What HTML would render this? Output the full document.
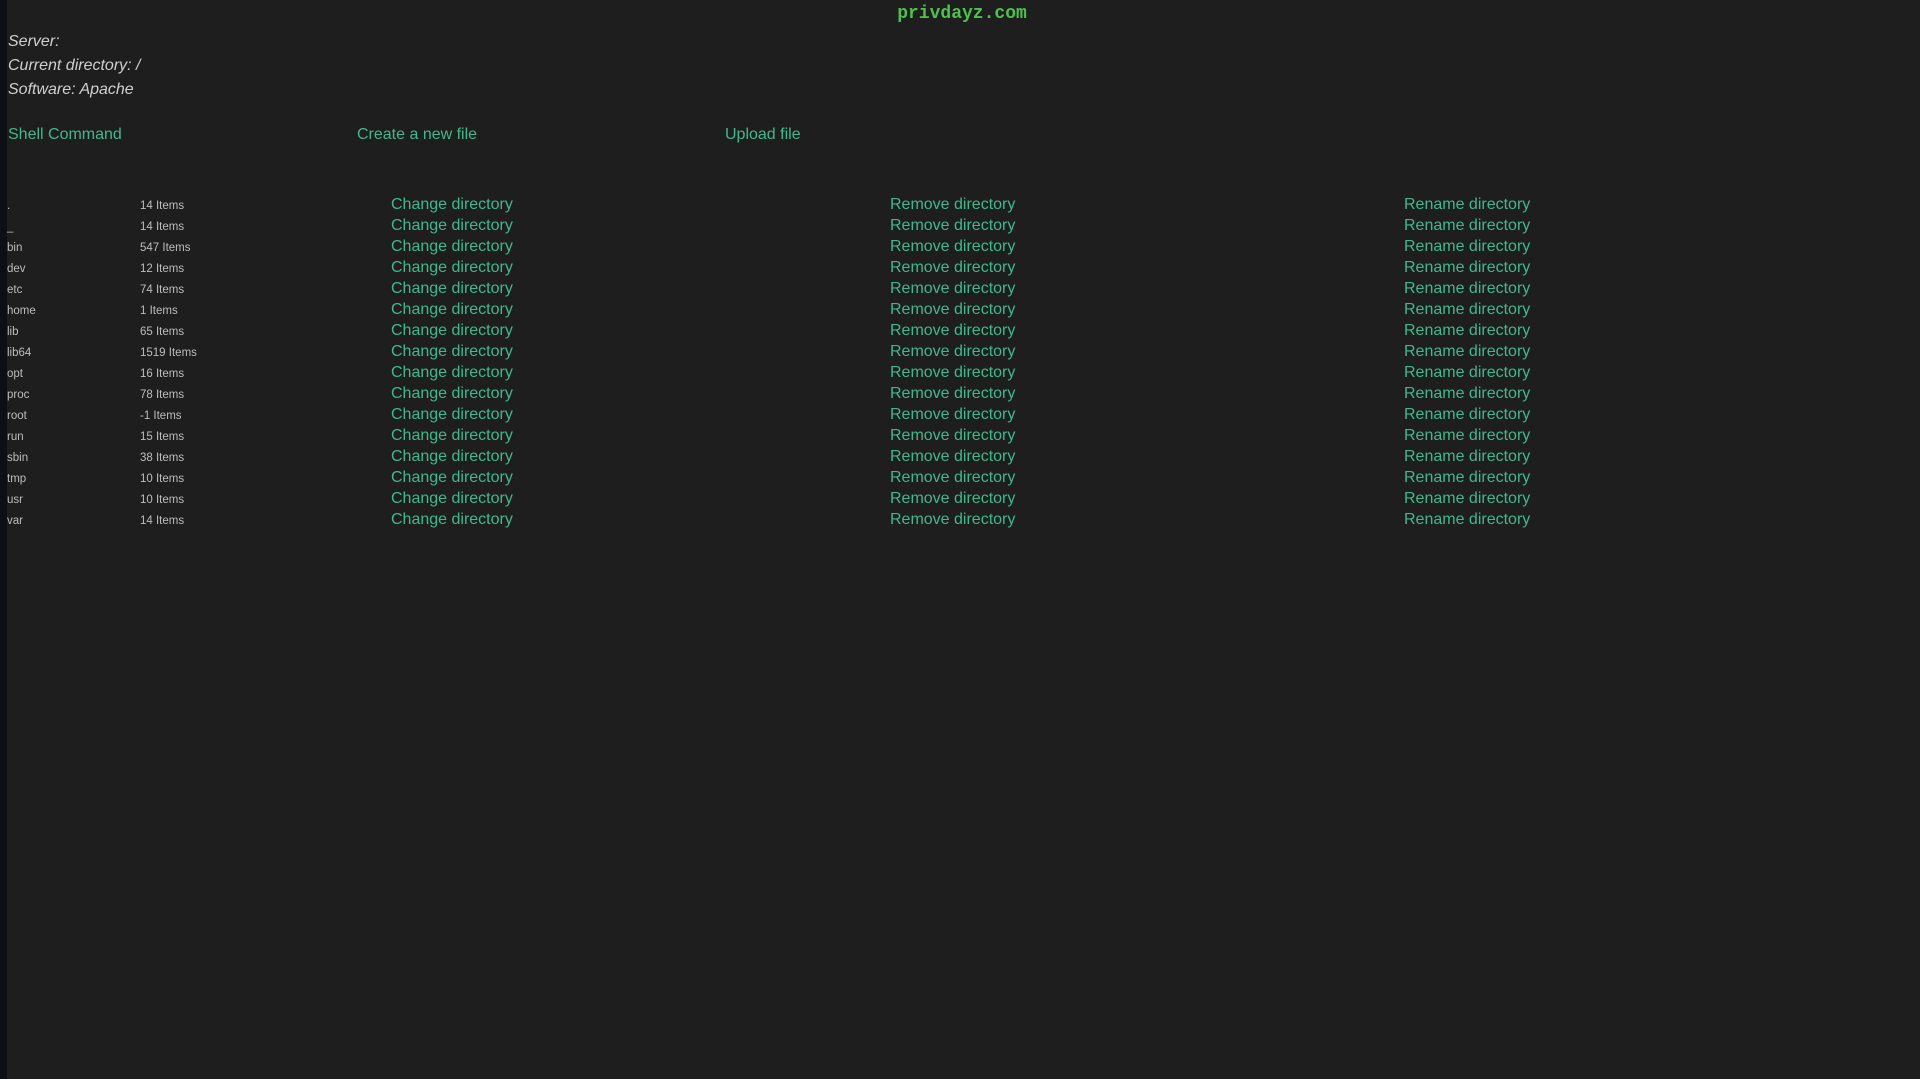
<!DOCTYPE html>
<html><head><meta charset="utf-8"><style>
html,body{margin:0;padding:0;background:#1e1e1e;width:1920px;height:1079px;overflow:hidden;font-family:"Liberation Sans",sans-serif}
.strip{position:absolute;left:0;top:0;width:7px;height:1079px;background:#0e0e16}
.t{position:absolute;white-space:nowrap}
.title{left:0;width:1924px;text-align:center;top:4px;font-family:"Liberation Mono",monospace;font-weight:bold;font-size:18px;color:#4cc24c}
.info{left:8px;font-style:italic;font-size:16px;color:#d0d0d0}
.lnk{color:#3dba8c;font-size:16px}
.row{font-size:16px;color:#3dba8c}
.nm{font-size:11.5px;color:#bdbdbd}
</style></head><body>
<div class="strip"></div>
<div class="t title">privdayz.com</div>
<div class="t info" style="top:33px">Server:</div>
<div class="t info" style="top:57px">Current directory: /</div>
<div class="t info" style="top:81px">Software: Apache</div>
<div class="t lnk" style="left:8px;top:126px">Shell Command</div>
<div class="t lnk" style="left:357px;top:126px">Create a new file</div>
<div class="t lnk" style="left:725px;top:126px">Upload file</div>
<div id="rows"></div>
<script>
var d=[[".","14"],["..","14"],["bin","547"],["dev","12"],["etc","74"],["home","1"],["lib","65"],["lib64","1519"],["opt","16"],["proc","78"],["root","-1"],["run","15"],["sbin","38"],["tmp","10"],["usr","10"],["var","14"]];
var h="";
d.forEach(function(r,i){var c=206+i*21;
h+='<div class="t nm" style="left:7px;top:'+(c-6)+'px">'+(r[0]=='..'?'_':r[0]=='.'?'.':r[0])+'</div>';
h+='<div class="t nm" style="left:140px;top:'+(c-6)+'px">'+r[1]+' Items</div>';
h+='<div class="t row" style="left:391px;top:'+(c-10)+'px">Change directory</div>';
h+='<div class="t row" style="left:890px;top:'+(c-10)+'px">Remove directory</div>';
h+='<div class="t row" style="left:1404px;top:'+(c-10)+'px">Rename directory</div>';});
document.getElementById("rows").innerHTML=h;
</script>
</body></html>
